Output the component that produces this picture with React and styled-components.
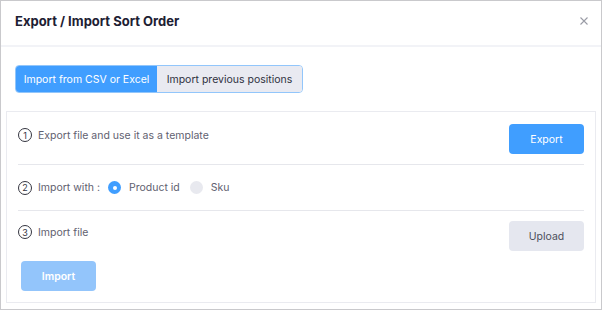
import React, { useState } from 'react'
import styled, { createGlobalStyle } from 'styled-components'

const GlobalStyle = createGlobalStyle`
  html, body {
    margin: 0;
    padding: 0;
    background: #ffffff;
  }
  body {
    font-family: Inter, "Open Sans", sans-serif;
    -webkit-font-smoothing: antialiased;
  }
  * {
    box-sizing: border-box;
  }
`

const Dialog = styled.div`
  width: 602px;
  height: 310px;
  border: 1px solid #c9c9cc;
  background: #fff;
  display: flex;
  flex-direction: column;
`
const Header = styled.div`
  height: 46px;
  display: flex;
  align-items: center;
  justify-content: space-between;
  padding: 0 12px 4px 14px;
  border-bottom: 2px solid #f2f3f7;
`
const Title = styled.h2`
  margin: 0;
  font-size: 13px;
  font-weight: 700;
  color: #1d2033;
`
const Close = styled.button`
  border: 0;
  background: none;
  padding: 0;
  width: 10px;
  height: 10px;
  cursor: pointer;
  display: flex;
`
const Body = styled.div`
  padding: 18px 5px 6px 5px;
  flex: 1;
  display: flex;
  flex-direction: column;
`
const Tabs = styled.div`
  display: flex;
  align-self: flex-start;
  margin-left: 9px;
  border: 1px solid #92c6fb;
  border-radius: 4px;
  overflow: hidden;
  height: 28px;
`
const Tab = styled.button`
  border: 0;
  margin: 0;
  padding: 0;
  white-space: nowrap;
  font-family: inherit;
  font-size: 10.5px;
  cursor: pointer;
  background: ${p => (p.$active ? '#409eff' : '#e9eaf1')};
  color: ${p => (p.$active ? '#ffffff' : '#2f3140')};
  width: ${p => p.$w}px;
`
const Card = styled.div`
  margin-top: 18px;
  flex: 1;
  border: 1px solid #eaebf0;
  padding: 0 11px;
  display: flex;
  flex-direction: column;
`
const Row = styled.div`
  display: flex;
  justify-content: space-between;
  align-items: ${p => p.$align || 'center'};
  padding: ${p => p.$pad};
  min-height: ${p => p.$h || 0}px;
  border-bottom: ${p => (p.$last ? '0' : '1px solid #e6e7ec')};
`
const Label = styled.div`
  display: flex;
  align-items: center;
  gap: 6px;
  font-size: 10.5px;
  color: #5f6170;
  padding-top: ${p => p.$top || 0}px;
`
const Step = styled.span`
  width: 14px;
  height: 14px;
  border-radius: 50%;
  border: 1.5px solid #34353f;
  font-size: 9px;
  color: #34353f;
  display: flex;
  align-items: center;
  justify-content: center;
`
const Button = styled.button`
  width: 75px;
  height: 30px;
  border: 0;
  border-radius: 4px;
  font-family: inherit;
  font-size: 10.5px;
  cursor: pointer;
  background: ${p => p.$bg};
  color: ${p => p.$color};
  font-weight: ${p => p.$weight || 400};
`
const RadioGroup = styled.div`
  display: flex;
  align-items: center;
  margin-left: 2px;
  gap: 10px;
`
const RadioItem = styled.label`
  display: flex;
  align-items: center;
  gap: 8px;
  cursor: pointer;
`
const RadioDot = styled.span`
  width: 13px;
  height: 13px;
  border-radius: 50%;
  background: ${p => (p.$on ? '#409eff' : '#e8e9ef')};
  display: flex;
  align-items: center;
  justify-content: center;
  &::after {
    content: '';
    width: 4px;
    height: 4px;
    border-radius: 50%;
    background: #fff;
    display: ${p => (p.$on ? 'block' : 'none')};
  }
`
const Footer = styled.div`
  padding: 10px 0 11px 3px;
`

export default function App () {
  const [tab, setTab] = useState(0)
  const [key, setKey] = useState('id')

  return (
    <>
      <GlobalStyle />
      <Dialog>
        <Header>
          <Title>Export / Import Sort Order</Title>
          <Close aria-label='close'>
            <svg width='10' height='10' viewBox='0 0 10 10'>
              <path d='M1.5 1.5 L8.5 8.5 M8.5 1.5 L1.5 8.5' stroke='#9a9ca6' strokeWidth='1.1' />
            </svg>
          </Close>
        </Header>
        <Body>
          <Tabs>
            <Tab $active={tab === 0} $w={141} onClick={() => setTab(0)}>Import from CSV or Excel</Tab>
            <Tab $active={tab === 1} $w={145} onClick={() => setTab(1)}>Import previous positions</Tab>
          </Tabs>
          <Card>
            <Row $align='flex-start' $pad='12px 0 10px 0'>
              <Label $top={4}><Step>1</Step>Export file and use it as a template</Label>
              <Button $bg='#409eff' $color='#fff'>Export</Button>
            </Row>
            <Row $pad='0' $h={46}>
              <Label>
                <Step>2</Step>Import with :
                <RadioGroup>
                  <RadioItem onClick={() => setKey('id')}>
                    <RadioDot $on={key === 'id'} />Product id
                  </RadioItem>
                  <RadioItem onClick={() => setKey('sku')}>
                    <RadioDot $on={key === 'sku'} />Sku
                  </RadioItem>
                </RadioGroup>
              </Label>
            </Row>
            <Row $last $align='flex-start' $pad='10px 0 0 0'>
              <Label $top={4}><Step>3</Step>Import file</Label>
              <Button $bg='#e5e7ef' $color='#4d4f5c'>Upload</Button>
            </Row>
            <Footer>
              <Button $bg='#93c5fb' $color='#fff' $weight={600}>Import</Button>
            </Footer>
          </Card>
        </Body>
      </Dialog>
    </>
  )
}
